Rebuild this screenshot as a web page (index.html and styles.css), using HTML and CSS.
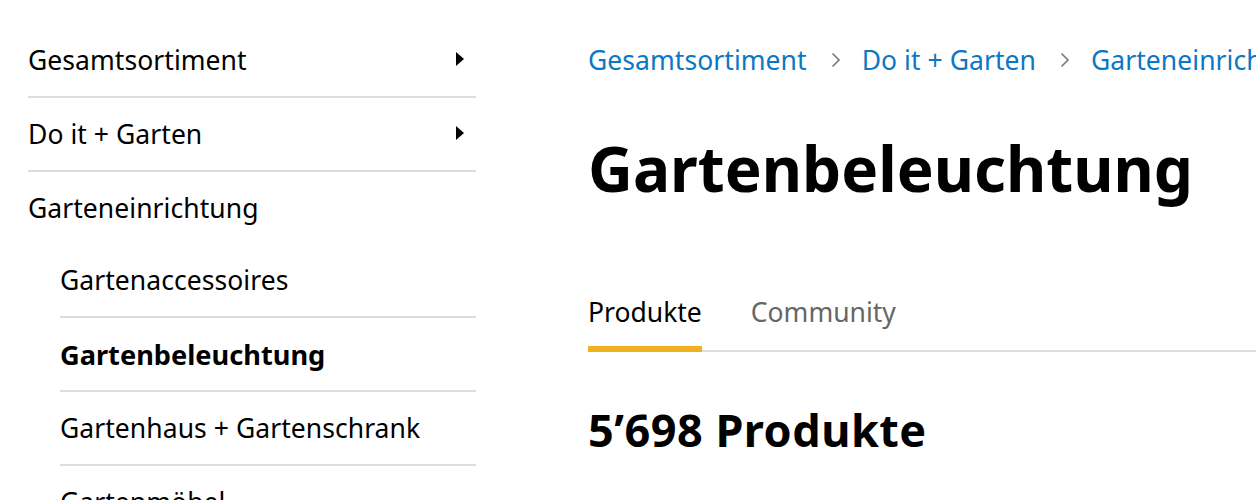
FILE: index.html
```html
<!DOCTYPE html>
<html lang="de">
<head>
<meta charset="utf-8">
<title>Gartenbeleuchtung</title>
<link rel="stylesheet" href="styles.css">
</head>
<body>
<div class="page">
  <nav class="sidebar">
    <ul class="nav">
      <li class="nav-item has-children"><a href="#">Gesamtsortiment</a><svg class="caret" width="8" height="14" viewBox="0 0 8 14"><path d="M0 0 L8 7 L0 14 Z" fill="#000"/></svg></li>
      <li class="nav-item has-children"><a href="#">Do it + Garten</a><svg class="caret" width="8" height="14" viewBox="0 0 8 14"><path d="M0 0 L8 7 L0 14 Z" fill="#000"/></svg></li>
      <li class="nav-item parent"><a href="#">Garteneinrichtung</a></li>
    </ul>
    <ul class="subnav">
      <li class="sub-item"><a href="#">Gartenaccessoires</a></li>
      <li class="sub-item active"><a href="#">Gartenbeleuchtung</a></li>
      <li class="sub-item"><a href="#">Gartenhaus + Gartenschrank</a></li>
      <li class="sub-item"><a href="#">Gartenmöbel</a></li>
    </ul>
  </nav>
  <main class="content">
    <ol class="breadcrumb">
      <li><a href="#">Gesamtsortiment</a></li>
      <li class="sep"><svg width="10" height="16" viewBox="0 0 10 16"><path d="M1.5 1.5 L8 8 L1.5 14.5" fill="none" stroke="#777" stroke-width="1.6"/></svg></li>
      <li><a href="#">Do it + Garten</a></li>
      <li class="sep"><svg width="10" height="16" viewBox="0 0 10 16"><path d="M1.5 1.5 L8 8 L1.5 14.5" fill="none" stroke="#777" stroke-width="1.6"/></svg></li>
      <li><a href="#">Garteneinrichtung</a></li>
    </ol>
    <h1 class="title">Gartenbeleuchtung</h1>
    <div class="tabs">
      <a class="tab active" href="#">Produkte</a>
      <a class="tab" href="#">Community</a>
    </div>
    <h2 class="count">5’698 Produkte</h2>
  </main>
</div>
</body>
</html>
```
FILE: styles.css
```css
html, body {
  margin: 0;
  padding: 0;
  background: #fff;
  overflow: hidden;
}
body {
  font-family: "Noto Sans", "Open Sans", sans-serif;
  color: #000;
  width: 1256px;
  height: 500px;
}
a {
  color: inherit;
  text-decoration: none;
}
ul, ol {
  list-style: none;
  margin: 0;
  padding: 0;
}
.page {
  display: flex;
  padding-left: 28px;
}
.sidebar {
  width: 448px;
  flex: none;
  padding-top: 24px;
}
.nav-item,
.sub-item {
  display: flex;
  align-items: center;
  justify-content: space-between;
  height: 72px;
  font-size: 26.5px;
  letter-spacing: 0.05px;
  border-bottom: 2px solid #dedede;
  box-sizing: content-box;
}
.nav-item .caret {
  margin-right: 12px;
  margin-top: -2px;
}
.nav-item.parent {
  border-bottom: none;
}
.subnav {
  margin-left: 32px;
}
.sub-item.active {
  font-weight: 700;
  font-size: 27.2px;
  letter-spacing: 0;
}
.content {
  margin-left: 112px;
  padding-top: 24px;
  white-space: nowrap;
  min-width: 0;
  flex: 1;
}
.breadcrumb {
  display: flex;
  align-items: center;
  height: 72px;
  font-size: 26.5px;
  letter-spacing: 0.05px;
  color: #0b77c5;
}
.breadcrumb .sep {
  display: flex;
  align-items: center;
  margin: 0 21px 0 24px;
}
.title {
  margin: 36px 0 0;
  font-size: 62px;
  font-weight: 700;
  line-height: 72px;
  letter-spacing: 0;
}
.tabs {
  display: flex;
  gap: 49px;
  margin-top: 90px;
  box-shadow: inset 0 -2px 0 #dedede;
}
.tab {
  font-size: 26.5px;
  line-height: 36px;
  padding-bottom: 16px;
  border-bottom: 6px solid transparent;
  color: #666;
}
.tab.active {
  color: #000;
  border-bottom-color: #efb122;
}
.count {
  margin: 52px 0 0;
  font-size: 45px;
  font-weight: 700;
  line-height: 52px;
  letter-spacing: 0.5px;
}
```
